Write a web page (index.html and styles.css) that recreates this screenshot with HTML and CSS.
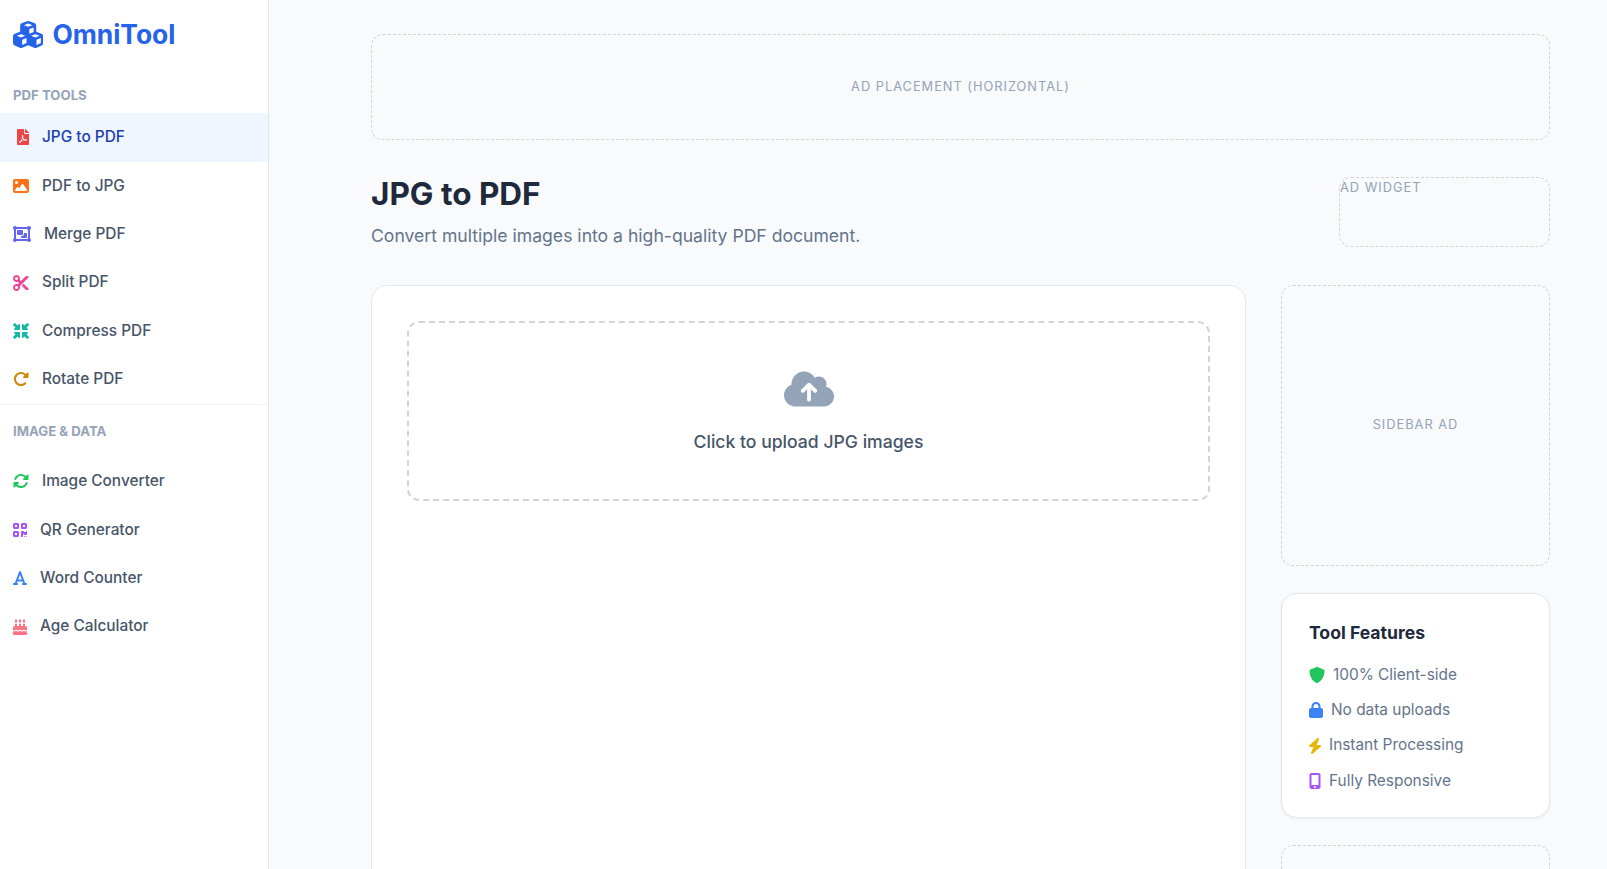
FILE: index.html
```html
<!DOCTYPE html>
<html lang="en">
<head>
    <meta charset="UTF-8">
    <meta name="viewport" content="width=device-width, initial-scale=1.0">
    <title>OmniTool - JPG to PDF</title>
    <link rel="stylesheet" href="styles.css">
</head>
<body>
    <aside class="sidebar">
        <div class="logo">
            <svg class="logo-icon" viewBox="0 0 576 512"><path d="M290.8 48.6l78.4 29.7L288 109.5 206.8 78.3l78.4-29.7c1.8-.7 3.8-.7 5.7 0zM136 92.5V204.7c-1.3 .4-2.6 .8-3.9 1.3l-96 36.4C14.4 250.6 0 271.5 0 294.7V413.9c0 22.2 13.1 42.3 33.5 51.3l96 42.2c14.4 6.3 30.7 6.3 45.1 0L288 457.5l113.5 49.9c14.4 6.3 30.7 6.3 45.1 0l96-42.2c20.3-8.9 33.5-29.1 33.5-51.3V294.7c0-23.3-14.4-44.1-36.1-52.4l-96-36.4c-1.3-.5-2.6-.9-3.9-1.3V92.5c0-23.3-14.4-44.1-36.1-52.4l-96-36.4c-12.8-4.8-26.9-4.8-39.7 0l-96 36.4C150.4 48.4 136 69.3 136 92.5zM392 210.6l-82.4 31.2V152.6L392 121v89.6zM154.8 250.9l78.4 29.7L152 311.7 70.8 280.6l78.4-29.7c1.8-.7 3.8-.7 5.7 0zm18.8 204.4V354.8L256 323.2v95.9l-82.4 36.2zM421.2 250.9c1.8-.7 3.8-.7 5.7 0l78.4 29.7L424 311.7l-81.2-31.1 78.4-29.7zM523.2 421.2l-77.6 34.1V354.8L528 323.2v90.7c0 3.2-1.9 6-4.8 7.3z"/></svg>
            <span>OmniTool</span>
        </div>

        <div class="nav-label">PDF Tools</div>
        <nav class="nav-group">
            <a class="nav-item active" href="#">
                <svg class="ico red" viewBox="0 0 384 512"><path d="M181.9 256.1c-5-16-4.9-46.9-2-46.9 8.4 0 7.6 36.9 2 46.9zm-1.7 47.2c-7.7 20.2-17.3 43.3-28.4 62.7 18.3-7 39-17.2 62.9-21.9-12.7-9.6-24.9-23.4-34.5-40.8zM86.1 428.1c0 .8 13.2-5.4 34.9-40.2-6.7 6.3-29.1 24.5-34.9 40.2zM248 160h136v328c0 13.3-10.7 24-24 24H24c-13.3 0-24-10.7-24-24V24C0 10.7 10.7 0 24 0h200v136c0 13.2 10.8 24 24 24zm-8 171.8c-20-12.2-33.3-29-42.7-53.8 4.5-18.5 11.6-46.6 6.2-64.2-4.7-29.4-42.4-26.5-47.8-6.8-5 18.3-.4 44.1 8.1 77-11.6 27.6-28.7 64.6-40.8 85.8-.1 0-.1.1-.2.1-27.1 13.9-73.6 44.5-54.5 68 5.6 6.9 16 10 21.5 10 17.9 0 35.7-18 61.1-61.8 25.8-8.5 54.1-19.1 79-23.2 21.7 11.8 47.1 19.5 64 19.5 29.2 0 31.2-32 19.7-43.4-13.9-13.6-54.3-9.7-73.6-7.2zM377 105L279 7c-4.5-4.5-10.6-7-17-7h-6v128h128v-6.1c0-6.3-2.5-12.4-7-16.9zm-74.1 255.3c4.1-2.7-2.5-11.9-42.8-9 37.1 15.8 42.8 9 42.8 9z"/></svg>
                JPG to PDF
            </a>
            <a class="nav-item" href="#">
                <svg class="ico orange" viewBox="0 0 512 512"><path d="M0 96C0 60.7 28.7 32 64 32H448c35.3 0 64 28.7 64 64V416c0 35.3-28.7 64-64 64H64c-35.3 0-64-28.7-64-64V96zM323.8 202.5c-4.5-6.6-11.9-10.5-19.8-10.5s-15.4 3.9-19.8 10.5l-87 127.6L170.7 297c-4.6-5.7-11.5-9-18.7-9s-14.2 3.3-18.7 9l-64 80c-5.8 7.2-6.9 17.1-2.9 25.4s12.4 13.6 21.6 13.6h96 32H424c8.9 0 17.1-4.9 21.2-12.8s3.6-17.4-1.4-24.7l-120-176zM112 192a48 48 0 1 0 0-96 48 48 0 1 0 0 96z"/></svg>
                PDF to JPG
            </a>
            <a class="nav-item" href="#">
                <svg class="ico indigo" viewBox="0 0 576 512"><path d="M32 119.4C12.9 108.4 0 87.7 0 64C0 28.7 28.7 0 64 0c23.7 0 44.4 12.9 55.4 32H456.6C467.6 12.9 488.3 0 512 0c35.3 0 64 28.7 64 64c0 23.7-12.9 44.4-32 55.4V392.6c19.1 11.1 32 31.7 32 55.4c0 35.3-28.7 64-64 64c-23.7 0-44.4-12.9-55.4-32H119.4c-11.1 19.1-31.7 32-55.4 32c-35.3 0-64-28.7-64-64c0-23.7 12.9-44.4 32-55.4V119.4zM456.6 96H119.4c-5.6 9.7-13.7 17.8-23.4 23.4V392.6c9.7 5.6 17.8 13.7 23.4 23.4H456.6c5.6-9.7 13.7-17.8 23.4-23.4V119.4c-9.7-5.6-17.8-13.7-23.4-23.4zM128 160c0-17.7 14.3-32 32-32H288c17.7 0 32 14.3 32 32v96c0 17.7-14.3 32-32 32H160c-17.7 0-32-14.3-32-32V160zM256 320h32c35.3 0 64-28.7 64-64V224h64c17.7 0 32 14.3 32 32v96c0 17.7-14.3 32-32 32H288c-17.7 0-32-14.3-32-32V320z"/></svg>
                Merge PDF
            </a>
            <a class="nav-item" href="#">
                <svg class="ico pink" viewBox="0 0 512 512"><path d="M256 192l-39.5-39.5c4.9-12.6 7.5-26.2 7.5-40.5C224 50.1 173.9 0 112 0S0 50.1 0 112s50.1 112 112 112c14.3 0 27.9-2.7 40.5-7.5L192 256l-39.5 39.5c-12.6-4.9-26.2-7.5-40.5-7.5C50.1 288 0 338.1 0 400s50.1 112 112 112s112-50.1 112-112c0-14.3-2.7-27.9-7.5-40.5L499.2 76.8c7.1-7.1 7.1-18.5 0-25.6c-28.3-28.3-74.1-28.3-102.4 0L256 192zm22.6 150.6L396.8 460.8c28.3 28.3 74.1 28.3 102.4 0c7.1-7.1 7.1-18.5 0-25.6L342.6 278.6l-64 64zM64 112a48 48 0 1 1 96 0 48 48 0 1 1 -96 0zm48 240a48 48 0 1 1 0 96 48 48 0 1 1 0-96z"/></svg>
                Split PDF
            </a>
            <a class="nav-item" href="#">
                <svg class="ico teal" viewBox="0 0 512 512"><path d="M456 224H312c-13.3 0-24-10.7-24-24V56c0-9.7 5.8-18.5 14.8-22.2s19.3-1.7 26.2 5.2l40 40L442.3 5.7C446 2 450.9 0 456 0s10 2 13.7 5.7l36.7 36.7C510 46 512 50.9 512 56s-2 10-5.7 13.7L433 143l40 40c6.9 6.9 8.9 17.2 5.2 26.2s-12.5 14.8-22.2 14.8zm0 64c9.7 0 18.5 5.8 22.2 14.8s1.7 19.3-5.2 26.2l-40 40 73.4 73.4c3.6 3.6 5.7 8.5 5.7 13.7s-2 10-5.7 13.7l-36.7 36.7C466 510 461.1 512 456 512s-10-2-13.7-5.7L369 433l-40 40c-6.9 6.9-17.2 8.9-26.2 5.2s-14.8-12.5-14.8-22.2V312c0-13.3 10.7-24 24-24H456zm-256 0c13.3 0 24 10.7 24 24V456c0 9.7-5.8 18.5-14.8 22.2s-19.3 1.7-26.2-5.2l-40-40L69.7 506.3C66 510 61.1 512 56 512s-10-2-13.7-5.7L5.7 469.7C2 466 0 461.1 0 456s2-10 5.7-13.7L79 369 39 329c-6.9-6.9-8.9-17.2-5.2-26.2s12.5-14.8 22.2-14.8H200zM56 224c-9.7 0-18.5-5.8-22.2-14.8s-1.7-19.3 5.2-26.2l40-40L5.7 69.7C2 66 0 61.1 0 56s2-10 5.7-13.7L42.3 5.7C46 2 50.9 0 56 0s10 2 13.7 5.7L143 79l40-40c6.9-6.9 17.2-8.9 26.2-5.2s14.8 12.5 14.8 22.2V200c0 13.3-10.7 24-24 24H56z"/></svg>
                Compress PDF
            </a>
            <a class="nav-item" href="#">
                <svg class="ico amber" viewBox="0 0 512 512"><path d="M463.5 224H472c13.3 0 24-10.7 24-24V72c0-9.7-5.8-18.5-14.8-22.2s-19.3-1.7-26.2 5.2L413.4 96.6c-87.6-86.5-228.7-86.2-315.8 1c-87.5 87.5-87.5 229.3 0 316.8s229.3 87.5 316.8 0c12.5-12.5 12.5-32.8 0-45.3s-32.8-12.5-45.3 0c-62.5 62.5-163.8 62.5-226.3 0s-62.5-163.8 0-226.3c62.2-62.2 162.7-62.5 225.3-1L327 183c-6.9 6.9-8.9 17.2-5.2 26.2s12.5 14.8 22.2 14.8H463.5z"/></svg>
                Rotate PDF
            </a>
        </nav>

        <div class="nav-label second">Image &amp; Data</div>
        <nav class="nav-group">
            <a class="nav-item" href="#">
                <svg class="ico green" viewBox="0 0 512 512"><path d="M142.9 142.9c62.2-62.2 162.7-62.5 225.3-1L327 183c-6.9 6.9-8.9 17.2-5.2 26.2s12.5 14.8 22.2 14.8H463.5c0 0 0 0 0 0H472c13.3 0 24-10.7 24-24V72c0-9.7-5.8-18.5-14.8-22.2s-19.3-1.7-26.2 5.2L413.4 96.6c-87.6-86.5-228.7-86.2-315.8 1C73.2 122 55.6 150.7 44.8 181.4c-5.9 16.7 2.9 34.9 19.5 40.8s34.9-2.9 40.8-19.5c7.7-21.8 20.2-42.3 37.8-59.8zM16 312v7.6 .7V440c0 9.7 5.8 18.5 14.8 22.2s19.3 1.7 26.2-5.2l41.6-41.6c87.6 86.5 228.7 86.2 315.8-1c24.4-24.4 42.1-53.1 52.9-83.7c5.9-16.7-2.9-34.9-19.5-40.8s-34.9 2.9-40.8 19.5c-7.7 21.8-20.2 42.3-37.8 59.8c-62.2 62.2-162.7 62.5-225.3 1L185 329c6.9-6.9 8.9-17.2 5.2-26.2s-12.5-14.8-22.2-14.8H48.4h-.7H40c-13.3 0-24 10.7-24 24z"/></svg>
                Image Converter
            </a>
            <a class="nav-item" href="#">
                <svg class="ico purple" viewBox="0 0 448 512"><path d="M0 80C0 53.5 21.5 32 48 32h96c26.5 0 48 21.5 48 48v96c0 26.5-21.5 48-48 48H48c-26.5 0-48-21.5-48-48V80zM64 96v64h64V96H64zM0 336c0-26.5 21.5-48 48-48h96c26.5 0 48 21.5 48 48v96c0 26.5-21.5 48-48 48H48c-26.5 0-48-21.5-48-48V336zm64 16v64h64V352H64zM304 32h96c26.5 0 48 21.5 48 48v96c0 26.5-21.5 48-48 48H304c-26.5 0-48-21.5-48-48V80c0-26.5 21.5-48 48-48zm80 64H320v64h64V96zM256 304c0-8.8 7.2-16 16-16h64c8.8 0 16 7.2 16 16s7.2 16 16 16h32c8.8 0 16-7.2 16-16s7.2-16 16-16s16 7.2 16 16v96c0 8.8-7.2 16-16 16H368c-8.8 0-16-7.2-16-16s-7.2-16-16-16s-16 7.2-16 16v64c0 8.8-7.2 16-16 16H272c-8.8 0-16-7.2-16-16V304zM368 480a16 16 0 1 1 0-32 16 16 0 1 1 0 32zm64 0a16 16 0 1 1 0-32 16 16 0 1 1 0 32z"/></svg>
                QR Generator
            </a>
            <a class="nav-item" href="#">
                <svg class="ico blue" viewBox="0 0 448 512"><path d="M254 52.8C249.3 40.3 237.3 32 224 32s-25.3 8.3-30 20.8L57.8 416H32c-17.7 0-32 14.3-32 32s14.3 32 32 32h96c17.7 0 32-14.3 32-32s-14.3-32-32-32h-1.8l18-48H303.8l18 48H320c-17.7 0-32 14.3-32 32s14.3 32 32 32h96c17.7 0 32-14.3 32-32s-14.3-32-32-32H390.2L254 52.8zM279.8 304H168.2L224 155.1 279.8 304z"/></svg>
                Word Counter
            </a>
            <a class="nav-item" href="#">
                <svg class="ico rose" viewBox="0 0 448 512"><path d="M86.4 5.5L61.8 47.6C58 54.1 56 61.6 56 69.2V72c0 22.1 17.9 40 40 40s40-17.9 40-40V69.2c0-7.6-2-15-5.8-21.6L105.6 5.5C103.6 2.1 100 0 96 0s-7.6 2.1-9.6 5.5zm128 0L189.8 47.6c-3.8 6.5-5.8 14-5.8 21.6V72c0 22.1 17.9 40 40 40s40-17.9 40-40V69.2c0-7.6-2-15-5.8-21.6L233.6 5.5C231.6 2.1 228 0 224 0s-7.6 2.1-9.6 5.5zM317.8 47.6c-3.8 6.5-5.8 14-5.8 21.6V72c0 22.1 17.9 40 40 40s40-17.9 40-40V69.2c0-7.6-2-15-5.8-21.6L361.6 5.5C359.6 2.1 356 0 352 0s-7.6 2.1-9.6 5.5L317.8 47.6zM128 176c0-17.7-14.3-32-32-32s-32 14.3-32 32v48c-35.3 0-64 28.7-64 64v71c8.3 5.2 18.1 9 28.8 9c13.5 0 27.2-6.1 38.4-13.4c5.4-3.5 9.9-7.1 13-9.7c1.5-1.3 2.7-2.4 3.5-3.1c.4-.4 .7-.6 .8-.8l.1-.1 0 0 0 0s0 0 0 0s0 0 0 0c3.1-3.2 7.4-4.9 11.9-4.8s8.6 2.1 11.6 5.4l0 0 0 0 .1 .1c.1 .1 .4 .4 .7 .7c.7 .7 1.7 1.7 3.1 3c2.8 2.6 6.8 6.1 11.8 9.5c10.2 7.1 23 13.1 36.3 13.1s26.1-6 36.3-13.1c5-3.5 9-6.9 11.8-9.5c1.4-1.3 2.4-2.3 3.1-3c.3-.3 .6-.6 .7-.7l.1-.1c3-3.5 7.4-5.4 12-5.4s9 2 12 5.4l.1 .1c.1 .1 .4 .4 .7 .7c.7 .7 1.7 1.7 3.1 3c2.8 2.6 6.8 6.1 11.8 9.5c10.2 7.1 23 13.1 36.3 13.1s26.1-6 36.3-13.1c5-3.5 9-6.9 11.8-9.5c1.4-1.3 2.4-2.3 3.1-3c.3-.3 .6-.6 .7-.7l.1-.1c2.9-3.4 7.1-5.3 11.6-5.4s8.7 1.6 11.9 4.8l0 0 0 0 0 0 .1 .1c.2 .2 .4 .4 .8 .8c.8 .7 1.9 1.8 3.5 3.1c3.1 2.6 7.5 6.2 13 9.7c11.2 7.3 24.9 13.4 38.4 13.4c10.7 0 20.5-3.9 28.8-9V288c0-35.3-28.7-64-64-64V176c0-17.7-14.3-32-32-32s-32 14.3-32 32v48H256V176c0-17.7-14.3-32-32-32s-32 14.3-32 32v48H128V176zM448 394.6c-8.5 3.3-18.2 5.4-28.8 5.4c-22.5 0-42.4-9.9-55.8-18.6c-4.1-2.7-7.8-5.4-10.9-7.8c-2.8 2.4-6.1 5-9.8 7.5C329.8 390 310.6 400 288 400s-41.8-10-54.6-18.9c-3.5-2.4-6.7-4.9-9.4-7.2c-2.7 2.3-5.9 4.7-9.4 7.2C201.8 390 182.6 400 160 400s-41.8-10-54.6-18.9c-3.7-2.6-7-5.2-9.8-7.5c-3.1 2.4-6.8 5.1-10.9 7.8C71.2 390.1 51.3 400 28.8 400c-10.6 0-20.3-2.2-28.8-5.4V480c0 17.7 14.3 32 32 32H416c17.7 0 32-14.3 32-32V394.6z"/></svg>
                Age Calculator
            </a>
        </nav>
    </aside>

    <main class="main">
        <div class="ad ad-top">AD PLACEMENT (HORIZONTAL)</div>

        <header class="page-head">
            <div>
                <h1>JPG to PDF</h1>
                <p>Convert multiple images into a high-quality PDF document.</p>
            </div>
            <div class="ad ad-widget">AD WIDGET</div>
        </header>

        <div class="columns">
            <section class="tool-card">
                <div class="upload-box">
                    <svg class="upload-icon" viewBox="0 0 640 512"><path d="M144 480C64.5 480 0 415.5 0 336c0-62.8 40.2-116.2 96.2-135.9c-.1-2.7-.2-5.4-.2-8.1c0-88.4 71.6-160 160-160c59.3 0 111 32.2 138.7 80.2C409.9 102 428.3 96 448 96c53 0 96 43 96 96c0 12.2-2.3 23.8-6.4 34.6C596 238.4 640 290.1 640 352c0 70.7-57.3 128-128 128H144zm79-217c-9.4 9.4-9.4 24.6 0 33.9s24.6 9.4 33.9 0l39-39V392c0 13.3 10.7 24 24 24s24-10.7 24-24V257.9l39 39c9.4 9.4 24.6 9.4 33.9 0s9.4-24.6 0-33.9l-80-80c-9.4-9.4-24.6-9.4-33.9 0l-80 80z"/></svg>
                    <div class="upload-text">Click to upload JPG images</div>
                </div>
            </section>

            <div class="side">
                <div class="ad ad-side">SIDEBAR AD</div>

                <div class="features">
                    <h3>Tool Features</h3>
                    <ul>
                        <li>
                            <svg class="ico green" viewBox="0 0 512 512"><path d="M466.5 83.7l-192-80a48.15 48.15 0 0 0-36.9 0l-192 80C27.7 91.1 16 108.6 16 128c0 198.5 114.5 335.7 221.5 380.3 11.8 4.9 25.1 4.9 36.9 0C360.1 472.6 496 349.3 496 128c0-19.4-11.7-36.9-29.5-44.3z"/></svg>
                            100% Client-side
                        </li>
                        <li>
                            <svg class="ico blue" viewBox="0 0 448 512"><path d="M144 144v48H304V144c0-44.2-35.8-80-80-80s-80 35.8-80 80zM80 192V144C80 64.5 144.5 0 224 0s144 64.5 144 144v48h16c35.3 0 64 28.7 64 64V448c0 35.3-28.7 64-64 64H64c-35.3 0-64-28.7-64-64V256c0-35.3 28.7-64 64-64H80z"/></svg>
                            No data uploads
                        </li>
                        <li>
                            <svg class="ico yellow" viewBox="32 0 384 512"><path d="M349.4 44.6c5.9-13.7 1.5-29.7-10.6-38.5s-28.6-8-39.9 1.8l-256 224c-10 8.8-13.6 22.9-8.9 35.3S50.7 288 64 288H175.5L98.6 467.4c-5.9 13.7-1.5 29.7 10.6 38.5s28.6 8 39.9-1.8l256-224c10-8.8 13.6-22.9 8.9-35.3s-16.6-20.7-30-20.7H272.5L349.4 44.6z"/></svg>
                            Instant Processing
                        </li>
                        <li>
                            <svg class="ico purple" viewBox="0 0 384 512"><path d="M16 64C16 28.7 44.7 0 80 0H304c35.3 0 64 28.7 64 64V448c0 35.3-28.7 64-64 64H80c-35.3 0-64-28.7-64-64V64zM224 448a32 32 0 1 0 -64 0 32 32 0 1 0 64 0zM304 64H80V384H304V64z"/></svg>
                            Fully Responsive
                        </li>
                    </ul>
                </div>

                <div class="ad ad-side"></div>
            </div>
        </div>
    </main>
</body>
</html>
```

FILE: styles.css
```css
* { margin: 0; padding: 0; box-sizing: border-box; }
html, body { height: 100%; overflow: hidden; }
body { font-family: Inter, "Noto Sans", sans-serif; background-color: #f8fafc; color: #1e293b; display: flex; line-height: 1.6; }

/* sidebar */
.sidebar { width: 269px; flex-shrink: 0; height: 100vh; background-color: #fff; border-right: 1px solid #e2e8f0; }
.logo { height: 69px; padding-left: 13px; display: flex; align-items: center; gap: 9px; font-size: 26.4px; font-weight: 700; color: #2563eb; }
.logo-icon { height: 27px; width: auto; fill: #2563eb; flex-shrink: 0; }
.nav-label { margin: 16px 0 7px; padding-left: 13px; font-size: 13.2px; font-weight: 700; color: #94a3b8; text-transform: uppercase; }
.nav-label.second { margin: 16px 0 15.5px; }
.nav-group { display: flex; flex-direction: column; }
.nav-group:first-of-type { border-bottom: 1px solid #f1f5f9; }
.nav-item { display: flex; align-items: center; gap: 13px; padding: 12px 13px; font-size: 15.4px; line-height: 24.4px; font-weight: 500; color: #475569; text-decoration: none; }
.nav-item.active { padding-left: 17px; background-color: #eff6ff; color: #1e40af; }
.ico { height: 16px; width: auto; flex-shrink: 0; fill: currentColor; }
.red { color: #ef4444; }
.orange { color: #f97316; }
.indigo { color: #6366f1; }
.pink { color: #ec4899; }
.teal { color: #14b8a6; }
.amber { color: #ca8a04; }
.green { color: #22c55e; }
.purple { color: #a855f7; }
.blue { color: #3b82f6; }
.rose { color: #fb7185; }
.yellow { color: #eab308; }

/* main area */
.main { flex: 1; min-width: 0; padding: 34px 57px 0 102px; }
.ad { display: flex; justify-content: center; align-items: center; background-color: #f8fafc; border: 1px dashed #d1d5db; border-radius: 12px; color: #94a3b8; font-size: 12.8px; letter-spacing: 1px; }
.ad-top { height: 106px; }
.page-head { display: flex; justify-content: space-between; align-items: center; margin: 33.5px 0 35.5px; }
.page-head h1 { font-size: 31.5px; font-weight: 700; line-height: 40px; color: #1e293b; }
.page-head p { margin-top: 8px; font-size: 17.6px; color: #64748b; }
.ad-widget { width: 211px; height: 70px; justify-content: flex-start; align-items: flex-start; }

.columns { display: grid; grid-template-columns: 875px 269px; gap: 35px; }
.tool-card { min-height: 800px; padding: 35px; background-color: #fff; border: 1px solid #e2e8f0; border-radius: 16px; }
.upload-box { display: flex; flex-direction: column; align-items: center; height: 180px; padding-top: 46px; border: 2px dashed #d1d5db; border-radius: 12px; }
.upload-icon { height: 40px; width: auto; fill: #94a3b8; }
.upload-text { margin-top: 19px; font-size: 17.6px; font-weight: 500; color: #475569; }

.side { display: flex; flex-direction: column; gap: 27px; }
.ad-side { height: 281px; flex-shrink: 0; }
.features { padding: 24.5px 27px 24px; background-color: #fff; border: 1px solid #e2e8f0; border-radius: 16px; box-shadow: 0 1px 3px rgba(0, 0, 0, 0.06); }
.features h3 { margin-bottom: 16px; font-size: 17.6px; font-weight: 700; color: #1e293b; }
.features ul { list-style: none; display: flex; flex-direction: column; gap: 10.7px; }
.features li { display: flex; align-items: center; gap: 8px; font-size: 15.4px; color: #64748b; }
```
